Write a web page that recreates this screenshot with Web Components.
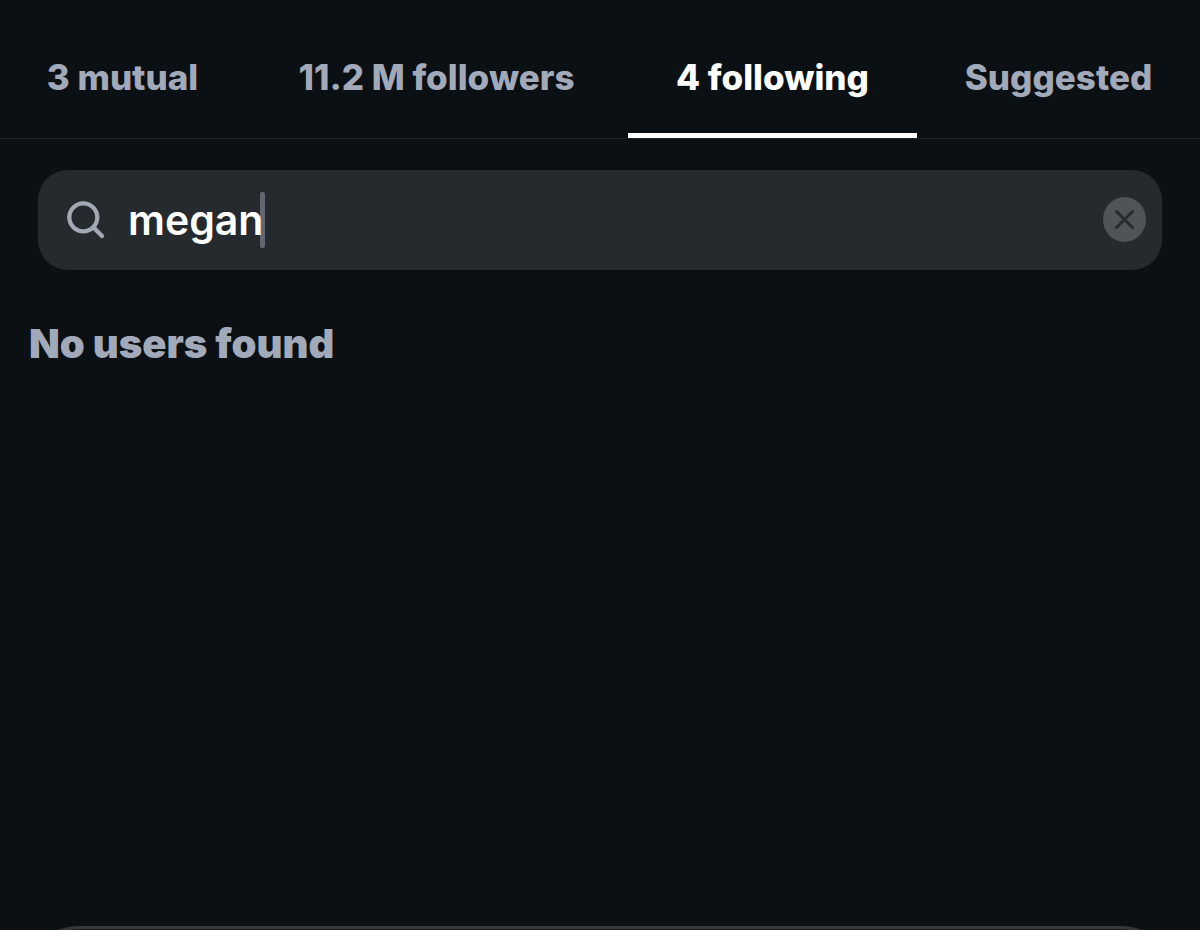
<!DOCTYPE html>
<html lang="en">
<head>
<meta charset="utf-8">
<meta name="viewport" content="width=device-width, initial-scale=1">
<title>Following</title>
<style>
  body { margin: 0; background: #0b1014; color: #a2a9b8; font-family: Inter, "Liberation Sans", sans-serif; }
</style>
</head>
<body>
<follow-page>
  <follow-tabs slot="tabs">
    <follow-tab>3 mutual</follow-tab>
    <follow-tab>11.2 M followers</follow-tab>
    <follow-tab active>4 following</follow-tab>
    <follow-tab>Suggested</follow-tab>
  </follow-tabs>
  <search-field value="megan"></search-field>
  <empty-message>No users found</empty-message>
  <bottom-sheet slot="sheet"></bottom-sheet>
</follow-page>
<script>
  class BaseElement extends HTMLElement {
    connectedCallback() {
      if (this.shadowRoot) return;
      this.attachShadow({ mode: 'open' }).innerHTML = this.render();
    }
  }

  customElements.define('follow-page', class extends BaseElement {
    render() {
      return `<style>
        :host { display: flex; flex-direction: column; min-height: 100vh; }
        main { flex: 1; }
      </style>
      <slot name="tabs"></slot>
      <main><slot></slot></main>
      <slot name="sheet"></slot>`;
    }
  });

  customElements.define('follow-tabs', class extends BaseElement {
    render() {
      return `<style>
        :host { display: block; border-bottom: 1px solid #20262a; }
        nav { display: grid; grid-template-columns: 245fr 383fr 289fr 283fr; padding-top: 20px; }
      </style>
      <nav aria-label="Connections"><slot></slot></nav>`;
    }
  });

  customElements.define('follow-tab', class extends BaseElement {
    render() {
      const active = this.hasAttribute('active');
      return `<style>
        :host { display: block; }
        button { display: block; width: 100%; height: 118px; padding: 0; border: 0;
          border-bottom: 5px solid transparent; background: none; color: inherit;
          font: 800 35px/40px Inter, "Liberation Sans", sans-serif;
          white-space: nowrap; cursor: pointer; }
        :host([active]) button { color: #fff; border-bottom-color: #fff; }
      </style>
      <button type="button" ${active ? 'aria-current="page"' : ''}><slot></slot></button>`;
    }
  });

  customElements.define('search-field', class extends BaseElement {
    render() {
      return `<style>
        :host { display: block; padding: 31px 38px 0; }
        .box { display: flex; align-items: center; height: 100px; box-sizing: border-box;
          padding: 0 16px 0 28px; border-radius: 30px; background: #252a2e; }
        .icon { flex: none; margin-right: 22px; }
        label { flex: 1; display: flex; align-items: center; min-width: 0; cursor: text; }
        input { position: relative; z-index: 1; field-sizing: content; min-width: 1px; max-width: 100%;
          padding: 0; border: 0; outline: 0; background: none; color: #fff; caret-color: transparent;
          font: 600 41px/56px Inter, "Liberation Sans", sans-serif; }
        .caret { flex: none; width: 5px; height: 56px; margin-left: -3px; border-radius: 2px; background: #636673; }
        button { flex: none; display: block; padding: 0; border: 0; background: none; cursor: pointer; }
        svg { display: block; }
      </style>
      <div class="box">
        <svg class="icon" width="40" height="40" viewBox="0 0 40 40" fill="none" stroke="#a2a9b4" stroke-width="4.300" stroke-linecap="round" aria-hidden="true">
          <circle cx="17.300" cy="17.300" r="14"/><path d="M27.300 27.300 36 36"/>
        </svg>
        <label><input type="text" aria-label="Search" value="${this.getAttribute('value') || ''}"><span class="caret"></span></label>
        <button type="button" aria-label="Clear search">
          <svg width="44" height="46" viewBox="0 0 44 46" aria-hidden="true">
            <ellipse cx="22.500" cy="22.500" rx="21.500" ry="22.500" fill="#505459"/>
            <path d="M14.500 14.500 30.500 30.500M30.500 14.500 14.500 30.500" stroke="#252a2e" stroke-width="3" stroke-linecap="round"/>
          </svg>
        </button>
      </div>`;
    }
  });

  customElements.define('empty-message', class extends BaseElement {
    render() {
      return `<style>
        :host { display: block; padding: 50px 29px 0; }
        p { margin: 0; font-size: 40px; line-height: 48px; font-weight: 900; }
      </style>
      <p><slot></slot></p>`;
    }
  });

  customElements.define('bottom-sheet', class extends BaseElement {
    render() {
      return `<style>
        :host { display: block; height: 4px; overflow: hidden; padding: 0 20px; }
        div { height: 120px; box-sizing: border-box; border: 3px solid #34373c; border-radius: 60px; background: #1c1b22; }
      </style>
      <div></div>`;
    }
  });
</script>
</body>
</html>
